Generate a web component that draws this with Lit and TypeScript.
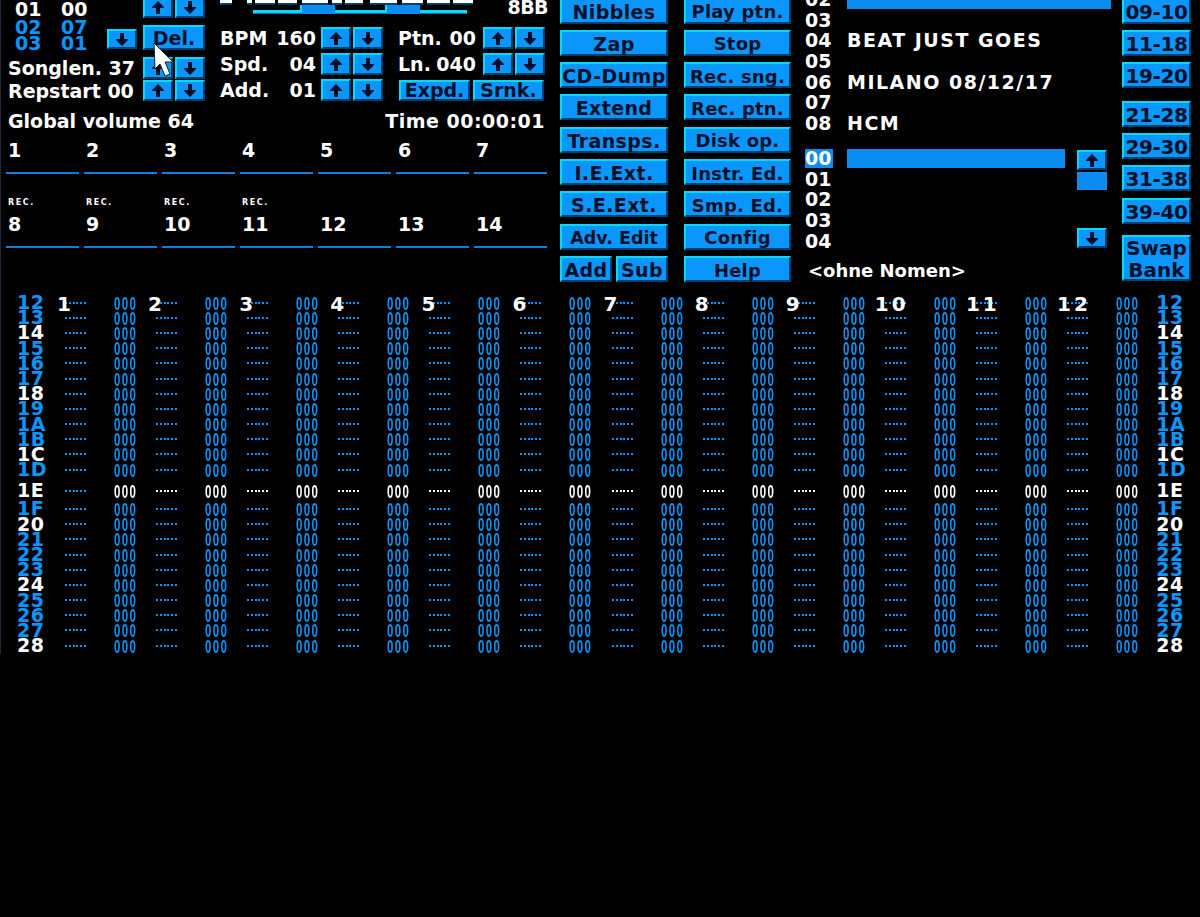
import {LitElement, css, html, svg} from 'lit'
import {customElement} from 'lit/decorators.js'

const col1 = ['Nibbles', 'Zap', 'CD-Dump', 'Extend', 'Transps.', 'I.E.Ext.', 'S.E.Ext.', 'Adv. Edit']
const col2 = ['Play ptn.', 'Stop', 'Rec. sng.', 'Rec. ptn.', 'Disk op.', 'Instr. Ed.', 'Smp. Ed.', 'Config', 'Help']
const rows = ['12','13','14','15','16','17','18','19','1A','1B','1C','1D','1E','1F','20','21','22','23','24','25','26','27','28']
const whiteRows = ['14', '18', '1C', '1E', '20', '24', '28']
const channels = Array.from({length: 12}, (_, i) => i)

// Bottom edges of the logo letters, the rest is scrolled off the top
const logoWhite = [[0, 12], [27, 5], [35, 20], [58, 19], [82, 26], [112, 10], [125, 18], [150, 27], [182, 21], [207, 23], [233, 20]]

@customElement('app-root')
export class AppRoot extends LitElement {

  static styles = css`
    :host {
      display: block;
      width: 1200px;
      height: 917px;
      background: #000;
      overflow: hidden;
      font-family: "DejaVu Sans", sans-serif;
      font-weight: bold;
      font-size: 19px;
      color: #fff;
    }

    .screen {
      position: relative;
      height: 654px;
      box-shadow: inset 1px 0 #1a2a3a;
    }

    .top {
      display: grid;
      grid-template-columns: 560px 124px 121px 317px 78px;
      height: 292px;
      overflow: hidden;
    }

    .btn {
      display: flex;
      align-items: center;
      justify-content: center;
      box-sizing: border-box;
      background: #0a96fa;
      border: 2px solid;
      border-color: #00dcff #00406e #00406e #00dcff;
      color: #001028;
      white-space: nowrap;
    }

    .arrow {
      width: 30px;
      height: 100%;
    }

    .arrow svg {
      display: block;
    }

    .pair {
      display: flex;
      gap: 2px;
      height: 100%;
    }

    .head {
      display: grid;
      grid-template-columns: 215px 1fr;
      height: 108px;
    }

    .side {
      display: flex;
      flex-direction: column;
      padding-left: 8px;
    }

    .line {
      display: flex;
      align-items: center;
      line-height: 20px;
      white-space: nowrap;
    }

    .r1 {
      height: 18px;
    }

    .r1 .pair {
      height: 22px;
      margin-top: -4px;
    }

    .r1 .spacer {
      width: 43px;
    }

    .r2 {
      height: 25px;
      margin-top: 7px;
    }

    .r3 {
      height: 22px;
      margin-top: 7px;
    }

    .r4 {
      height: 21px;
      margin-top: 1px;
    }

    .pos {
      width: 46px;
      padding-left: 7px;
      box-sizing: border-box;
    }

    .blue {
      color: #0a96fa;
    }

    .blue-list {
      display: flex;
      flex-direction: column;
      width: 99px;
      margin-top: -6px;
    }

    .blue-list div {
      display: flex;
      height: 16px;
      line-height: 16px;
    }

    .small-down {
      width: 30px;
      height: 20px;
      margin: 3px 6px 0 0;
    }

    .del {
      width: 62px;
      height: 100%;
    }

    .label {
      width: 135px;
    }

    .main {
      padding-left: 5px;
    }

    .logo-row {
      display: flex;
      justify-content: space-between;
      height: 27px;
      padding-right: 12px;
    }

    .tiny {
      font-size: 19px;
      line-height: 15px;
      letter-spacing: -0.6px;
    }

    .ctl {
      display: grid;
      grid-template-columns: 96px 62px 90px 62px;
      column-gap: 5px;
      align-items: center;
      height: 22px;
      white-space: nowrap;
    }

    .ctl + .ctl {
      margin-top: 4px;
    }

    .ctl .kv {
      display: flex;
      justify-content: space-between;
    }

    .ctl .kv.second {
      margin-left: 10px;
      margin-right: 2px;
    }

    .actions {
      display: flex;
      gap: 3px;
      grid-column: 3 / 5;
      height: 21px;
      margin-left: 11px;
    }

    .actions .btn {
      width: 71px;
    }

    .global {
      display: flex;
      justify-content: space-between;
      align-items: center;
      height: 22px;
      padding: 2px 15px 0 8px;
    }

    .time {
      letter-spacing: 0.5px;
    }

    .tracks {
      display: grid;
      grid-template-columns: repeat(7, 73px);
      grid-template-rows: 42px 74px;
      column-gap: 5px;
      padding-left: 6px;
    }

    .track {
      display: flex;
      flex-direction: column;
      justify-content: flex-end;
      padding: 0 0 12px 2px;
      border-bottom: 2px solid #0a80dc;
      box-sizing: border-box;
      line-height: 20px;
    }

    .rec {
      font-size: 8px;
      line-height: 10px;
      letter-spacing: 1.6px;
      margin-bottom: 6px;
    }

    .buttons {
      display: grid;
      grid-auto-rows: 26px;
      row-gap: 6.33px;
      margin-top: -2.5px;
      align-content: start;
    }

    .col-c .btn, .col-d .btn, .banks .btn {
      padding-top: 2px;
    }

    .col-c .btn {
      width: 108px;
      letter-spacing: 0.4px;
    }

    .col-c .btn.fit {
      font-size: 17.5px;
      letter-spacing: 0;
    }

    .col-d .btn {
      width: 107px;
      font-size: 18px;
      letter-spacing: 0.2px;
    }

    .addsub {
      display: flex;
      justify-content: space-between;
      width: 108px;
    }

    .col-c .addsub .btn {
      width: 52px;
    }

    .list-col {
      display: flex;
      flex-direction: column;
    }

    .entry {
      display: grid;
      grid-template-columns: 42px 264px;
      align-items: center;
      height: 20.6px;
      line-height: 20px;
    }

    .name {
      letter-spacing: 1.5px;
      white-space: nowrap;
    }

    .bar {
      height: 19px;
      background: #0a8cf0;
    }

    .songs {
      margin-top: -11px;
      height: 159px;
    }

    .samples {
      display: grid;
      grid-template-columns: 272px 30px;
      height: 102px;
    }

    .samples .entry {
      grid-template-columns: 42px 218px;
    }

    .selected {
      width: 28px;
      height: 19px;
      line-height: 18px;
      background: #0a8cf0;
    }

    .scroll {
      display: flex;
      flex-direction: column;
      padding-top: 2px;
    }

    .scroll .btn {
      height: 20px;
      flex: none;
    }

    .scroll .thumb {
      height: 18px;
      margin: 2px 0 38px;
      background: #0a8cf0;
    }

    .sample-name {
      margin: 11px 0 0 3px;
      line-height: 20px;
      font-size: 18px;
    }

    .banks {
      width: 69px;
      display: flex;
      flex-direction: column;
      margin-top: -2.5px;
    }

    .banks .btn {
      height: 26px;
      margin-bottom: 6.4px;
      font-size: 20px;
      letter-spacing: -0.4px;
    }

    .banks .gap {
      margin-top: 6px;
    }

    .banks .swap {
      height: 46px;
      margin-top: 5px;
      line-height: 22px;
      text-align: center;
      letter-spacing: 0;
    }

    .pattern {
      padding-top: 3px;
    }

    .row {
      display: grid;
      grid-template-columns: 65px repeat(12, 91.1px) 42px;
      align-items: center;
      height: 15.2px;
    }

    .row.focus {
      height: 21.5px;
      margin-top: 2.6px;
    }

    .hex {
      line-height: 15px;
      letter-spacing: 0.6px;
      color: #0a96fa;
    }

    .hex.left {
      padding-left: 17px;
    }

    .hex.right {
      margin-left: -2px;
    }

    .hex.white {
      color: #fff;
    }

    .cell {
      position: relative;
      display: flex;
      align-items: center;
    }

    .dots {
      width: 22px;
      height: 2px;
      background: repeating-linear-gradient(90deg, #0a96fa 0 2px, transparent 2px 3.8px);
    }

    .dots.white {
      background: repeating-linear-gradient(90deg, #fff 0 2px, transparent 2px 3.8px);
    }

    .vol {
      margin-left: 27px;
      font-family: "Liberation Sans", sans-serif;
      font-size: 11.5px;
      line-height: 12px;
      letter-spacing: 1.35px;
      color: #0a96fa;
      transform: scaleY(1.65);
      will-change: transform;
    }

    .vol.white {
      color: #fff;
    }

    .chan {
      position: absolute;
      left: -8px;
      top: -3px;
      font-size: 20px;
      line-height: 20px;
      color: #fff;
    }

    .chan.wide {
      letter-spacing: 3px;
      left: -10px;
    }

    .cursor {
      position: absolute;
      left: 153px;
      top: 42px;
    }
  `

  _arrow(up: boolean) {
    const pts = up
      ? '6,0 12,6 12,7 8,7 8,13 4,13 4,7 0,7 0,6'
      : '4,0 8,0 8,6 12,6 12,7 6,13 0,7 0,6 4,6'
    return html`<div class="btn arrow">
      <svg width="12" height="13" viewBox="0 0 12 13"><polygon points="${pts}" fill="#001028"></polygon></svg>
    </div>`
  }

  _updown() {
    return html`<div class="pair">${this._arrow(true)}${this._arrow(false)}</div>`
  }

  _logo() {
    return html`<svg width="280" height="16" viewBox="0 0 280 16">
      ${logoWhite.map(([x, w]) => svg`
        <rect x="${x}" y="2" width="${w}" height="3" fill="#00406e"></rect>
        <rect x="${x}" y="0" width="${w}" height="3" fill="#fff"></rect>`)}
      <rect x="33" y="10" width="214" height="3" fill="#00dcff"></rect>
      <rect x="33" y="13" width="214" height="1" fill="#0068b0"></rect>
      <rect x="80" y="5" width="2" height="6" fill="#00dcff"></rect>
      <rect x="82" y="5" width="33" height="9" fill="#0a8cf0"></rect>
      <rect x="165" y="5" width="2" height="6" fill="#00dcff"></rect>
      <rect x="167" y="5" width="33" height="9" fill="#0a8cf0"></rect>
    </svg>`
  }

  _head() {
    return html`
      <div class="head">
        <div class="side">
          <div class="line r1">
            <span class="pos">01</span><span class="pos">00</span>
            <span class="spacer"></span>
            ${this._updown()}
          </div>
          <div class="line r2">
            <div class="blue-list blue">
              <div><span class="pos">02</span><span class="pos">07</span></div>
              <div><span class="pos">03</span><span class="pos">01</span></div>
            </div>
            <div class="small-down">${this._arrow(false)}</div>
            <div class="btn del">Del.</div>
          </div>
          <div class="line r3"><span class="label">Songlen. 37</span>${this._updown()}</div>
          <div class="line r4"><span class="label">Repstart 00</span>${this._updown()}</div>
        </div>
        <div class="main">
          <div class="logo-row">${this._logo()}<span class="tiny">8BB</span></div>
          <div class="ctl">
            <div class="kv"><span>BPM</span><span>160</span></div>${this._updown()}
            <div class="kv second"><span>Ptn.</span><span>00</span></div>${this._updown()}
          </div>
          <div class="ctl">
            <div class="kv"><span>Spd.</span><span>04</span></div>${this._updown()}
            <div class="kv second"><span>Ln.</span><span>040</span></div>${this._updown()}
          </div>
          <div class="ctl">
            <div class="kv"><span>Add.</span><span>01</span></div>${this._updown()}
            <div class="actions"><div class="btn">Expd.</div><div class="btn">Srnk.</div></div>
          </div>
        </div>
      </div>
    `
  }

  _tracks() {
    return html`<div class="tracks">
      ${Array.from({length: 14}, (_, i) => html`
        <div class="track">
          ${i >= 7 && i < 11 ? html`<div class="rec">REC.</div>` : ''}
          <div>${i + 1}</div>
        </div>
      `)}
    </div>`
  }

  _songs() {
    const names: Record<string, string> = {'04': 'BEAT JUST GOES', '06': 'MILANO 08/12/17', '08': 'HCM'}
    return html`<div class="songs">
      ${['02','03','04','05','06','07','08'].map((n) => html`
        <div class="entry">
          <span>${n}</span>
          ${n === '02' ? html`<div class="bar"></div>` : html`<span class="name">${names[n] ?? ''}</span>`}
        </div>
      `)}
    </div>`
  }

  _samples() {
    return html`<div class="samples">
      <div>
        ${['00','01','02','03','04'].map((n) => html`
          <div class="entry">
            <span class="${n === '00' ? 'selected' : ''}">${n}</span>
            ${n === '00' ? html`<div class="bar"></div>` : ''}
          </div>
        `)}
      </div>
      <div class="scroll">
        ${this._arrow(true)}
        <div class="thumb"></div>
        ${this._arrow(false)}
      </div>
    </div>`
  }

  _row(r: string) {
    const focus = r === '1E'
    const white = whiteRows.includes(r)
    return html`<div class="row ${focus ? 'focus' : ''}">
      <div class="hex left ${white ? 'white' : ''}">${r}</div>
      ${channels.map((c) => html`
        <div class="cell">
          <div class="dots ${focus && c > 0 ? 'white' : ''}"></div>
          <div class="vol ${focus ? 'white' : ''}">000</div>
          ${r === '12' ? html`<span class="chan ${c >= 9 ? 'wide' : ''}">${c + 1}</span>` : ''}
        </div>
      `)}
      <div class="hex right ${white ? 'white' : ''}">${r}</div>
    </div>`
  }

  render() {
    return html`
      <div class="screen">
        <div class="top">
          <div>
            ${this._head()}
            <div class="global"><span>Global volume 64</span><span class="time">Time 00:00:01</span></div>
            ${this._tracks()}
          </div>
          <div class="buttons col-c">
            ${col1.map((t) => html`<div class="btn ${t === 'Adv. Edit' ? 'fit' : ''}">${t}</div>`)}
            <div class="addsub"><div class="btn">Add</div><div class="btn">Sub</div></div>
          </div>
          <div class="buttons col-d">
            ${col2.map((t) => html`<div class="btn">${t}</div>`)}
          </div>
          <div class="list-col">
            ${this._songs()}
            ${this._samples()}
            <div class="sample-name">&lt;ohne Nomen&gt;</div>
          </div>
          <div class="banks">
            <div class="btn">09-10</div>
            <div class="btn">11-18</div>
            <div class="btn">19-20</div>
            <div class="btn gap">21-28</div>
            <div class="btn">29-30</div>
            <div class="btn">31-38</div>
            <div class="btn">39-40</div>
            <div class="btn swap">Swap<br>Bank</div>
          </div>
        </div>
        <div class="pattern">
          ${rows.map((r) => this._row(r))}
        </div>
        <svg class="cursor" width="24" height="36" viewBox="0 0 24 36">
          <polygon points="1,1 20,20 12,20 17,32 12,34 7,22 2,27" fill="#fff" stroke="#10202c" stroke-width="1"></polygon>
        </svg>
      </div>
    `
  }
}
